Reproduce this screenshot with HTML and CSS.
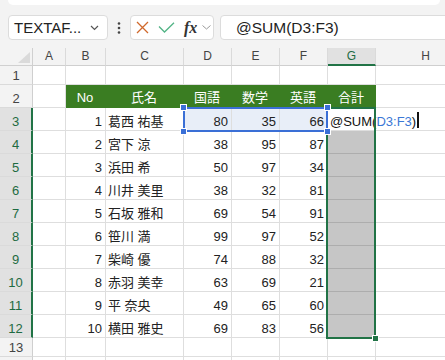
FILE: index.html
```html
<!DOCTYPE html>
<html lang="ja">
<head>
    <meta charset="UTF-8">
    <meta name="viewport" content="width=device-width, initial-scale=1.0">
    <title>成績表</title>
    <link rel="stylesheet" href="styles.css">
</head>
<body>
    <div class="ribbon-edge"></div>

    <div class="toolbar">
        <div class="name-box">
            <span>TEXTAF...</span>
            <svg width="9" height="6" viewBox="0 0 9 6"><path d="M1 1l3.5 3.5L8 1" fill="none" stroke="#555" stroke-width="1.2"/></svg>
        </div>
        <div class="more">
            <svg width="4" height="12" viewBox="0 0 4 12" fill="#444"><circle cx="2" cy="1.5" r="1.3"/><circle cx="2" cy="6" r="1.3"/><circle cx="2" cy="10.5" r="1.3"/></svg>
        </div>
        <div class="fx-box">
            <svg class="cancel" width="13" height="13" viewBox="0 0 13 13"><path d="M1 1L12 12M12 1L1 12" fill="none" stroke="#d0692c" stroke-width="1.3"/></svg>
            <svg class="enter" width="17" height="11" viewBox="0 0 17 11"><path d="M1 4.5l5.5 5.5L16 0.8" fill="none" stroke="#52b486" stroke-width="1.3"/></svg>
            <span class="fx">fx</span>
            <svg width="9" height="5" viewBox="0 0 9 5"><path d="M0.5 0.5l4 3.5 4-3.5" fill="none" stroke="#9a9a9a" stroke-width="1"/></svg>
        </div>
        <div class="formula">@SUM(D3:F3)</div>
    </div>

    <div class="sheet" id="sheet">
        <div class="selection"><span class="fill-handle"></span></div>
        <div class="range">
            <span class="grip tl"></span><span class="grip tr"></span>
            <span class="grip bl"></span><span class="grip br"></span>
        </div>
    </div>

    <script>
        const sheet = document.getElementById('sheet');

        const letters = ['A', 'B', 'C', 'D', 'E', 'F', 'G', 'H'];
        const heads = ['No', '氏名', '国語', '数学', '英語', '合計'];
        const data = [
            [1, '葛西 祐基', 80, 35, 66],
            [2, '宮下 涼', 38, 95, 87],
            [3, '浜田 希', 50, 97, 34],
            [4, '川井 美里', 38, 32, 81],
            [5, '石坂 雅和', 69, 54, 91],
            [6, '笹川 満', 99, 97, 52],
            [7, '柴崎 優', 74, 88, 32],
            [8, '赤羽 美幸', 63, 69, 21],
            [9, '平 奈央', 49, 65, 60],
            [10, '横田 雅史', 69, 83, 56]
        ];

        function cell(cls, text) {
            const d = document.createElement('div');
            d.className = cls;
            if (text !== undefined) d.textContent = text;
            sheet.appendChild(d);
            return d;
        }

        // column headers
        cell('corner').innerHTML = '<div class="tri"></div>';
        letters.forEach(l => cell(l === 'G' ? 'col-head sel' : 'col-head', l));

        // rows (row 14 only peeks in at the bottom edge, so no label)
        for (let r = 1; r <= 14; r++) {
            const inData = r >= 3 && r <= 12;
            cell(inData ? 'row-head sel' : 'row-head', r < 14 ? r : undefined);
            cell('cell'); // A

            if (r === 2) {
                heads.forEach(h => cell('cell hdr', h));
            } else if (inData) {
                const [no, name, ...scores] = data[r - 3];
                cell('cell num', no);
                cell('cell name', name);
                scores.forEach(s => cell(r === 3 ? 'cell num ref' : 'cell num', s));
                if (r === 3) {
                    cell('cell edit').innerHTML = '<span>@SUM(<span class="arg">D3:F3</span>)</span><span class="caret"></span>';
                } else {
                    cell('cell shade');
                }
            } else {
                for (let c = 0; c < 6; c++) cell('cell');
            }

            cell('cell'); // H
        }
    </script>
</body>
</html>
```

FILE: styles.css
```css
body {
    margin: 0;
    width: 445px;
    height: 360px;
    overflow: hidden;
    background-color: #f3f3f3;
    font-family: "Liberation Sans", "Noto Sans CJK JP", sans-serif;
    color: #222;
}

.ribbon-edge {
    height: 5px;
    margin: 0 5px 0 8px;
    background-color: #fff;
    border-radius: 0 0 6px 6px;
}

/* formula bar */
.toolbar {
    display: flex;
    align-items: center;
    height: 25px;
    margin: 10px 0 8px 8px;
}
.name-box, .fx-box, .formula {
    height: 25px;
    box-sizing: border-box;
    background-color: #fff;
    border: 1px solid #dcdcdc;
    border-radius: 4px;
    display: flex;
    align-items: center;
    flex-shrink: 0;
}
.name-box {
    width: 100px;
    justify-content: space-between;
    padding: 0 8px 0 5px;
    font-size: 15px;
}
.more {
    width: 22px;
    display: flex;
    justify-content: center;
    flex-shrink: 0;
}
.fx-box {
    width: 84px;
    padding-left: 5px;
}
.fx-box .enter {
    margin-left: 9px;
}
.fx {
    margin-left: 9px;
    margin-right: 5px;
    font-family: "Liberation Serif", serif;
    font-style: italic;
    font-weight: bold;
    font-size: 16px;
    color: #333;
}
.formula {
    width: 260px;
    margin-left: 6px;
    padding-left: 15px;
    font-size: 15.5px;
}

/* grid */
.sheet {
    position: relative;
    display: grid;
    grid-template-columns: 33px 33px 40px 78px 48px 48px 48px 48px 100px;
    grid-template-rows: 18px 19px repeat(11, 23px) 19px 19px;
    background-color: #fff;
}
.corner {
    background-color: #f3f3f3;
    border-right: 1px solid #d0d0d0;
    border-bottom: 1px solid #d0d0d0;
    display: flex;
    align-items: flex-end;
    justify-content: flex-end;
    padding: 0 2px 2px 0;
}
.tri {
    width: 12px;
    height: 11px;
    background-color: #dadada;
    clip-path: polygon(100% 0, 100% 100%, 0 100%);
}
.col-head {
    background-color: #f3f3f3;
    border-right: 1px solid #dadada;
    border-bottom: 1px solid #cfcfcf;
    font-size: 12px;
    line-height: 14px;
    color: #444;
    display: flex;
    align-items: flex-end;
    justify-content: center;
    padding-bottom: 2px;
}
.col-head.sel {
    background-color: #e1e1e1;
    color: #1e6b41;
    border-bottom: 2px solid #217346;
    padding-bottom: 1px;
}
.row-head {
    background-color: #f3f3f3;
    border-right: 1px solid #cfcfcf;
    border-bottom: 1px solid #dadada;
    font-size: 13px;
    line-height: 15px;
    color: #444;
    display: flex;
    align-items: flex-end;
    justify-content: center;
    padding-bottom: 1px;
}
.row-head.sel {
    background-color: #e1e1e1;
    color: #1e6b41;
    border-right: 2px solid #217346;
}
.cell {
    border-right: 1px solid #dedede;
    border-bottom: 1px solid #dedede;
    font-size: 13px;
    line-height: 15px;
    display: flex;
    align-items: flex-end;
    padding: 0 3px 1px 2px;
    white-space: nowrap;
    min-width: 0;
}
.num {
    justify-content: flex-end;
}
.hdr {
    background-color: #3a7d22;
    border-color: #3a7d22;
    color: #fff;
    justify-content: center;
    padding-bottom: 2px;
}
.ref {
    background-color: #e8eef8;
}
.shade {
    background-color: #c6c6c6;
    border-bottom-color: #adadad;
}
.edit {
    color: #111;
}
.edit > span {
    flex-shrink: 0;
}
.arg {
    color: #3b78d6;
}
.caret {
    width: 2px;
    height: 16px;
    margin-left: 1px;
    margin-bottom: 1px;
    background-color: #111;
}

/* selection overlays */
.selection {
    position: absolute;
    left: 326px;
    top: 59px;
    width: 50px;
    height: 232px;
    box-sizing: border-box;
    border: 2px solid #217346;
}
.fill-handle {
    position: absolute;
    right: -5px;
    bottom: -5px;
    width: 5px;
    height: 5px;
    background-color: #217346;
    border: 1px solid #fff;
}
.range {
    position: absolute;
    left: 183px;
    top: 59px;
    width: 145px;
    height: 25px;
    box-sizing: border-box;
    border: 2px solid #3a6fd6;
}
.grip {
    position: absolute;
    width: 5px;
    height: 5px;
    background-color: #3a6fd6;
    border: 1px solid #fff;
}
.tl { left: -5px; top: -5px; }
.tr { right: -5px; top: -5px; }
.bl { left: -5px; bottom: -5px; }
.br { right: -5px; bottom: -5px; }
```
